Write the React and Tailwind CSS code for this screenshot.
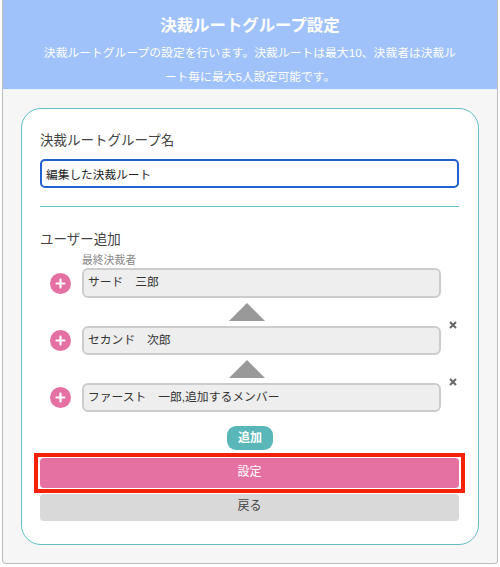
import React from "react"

const font = { fontFamily: '"Liberation Sans", "Noto Sans CJK JP", sans-serif' }

function PlusButton() {
  return (
    <button className="w-[21px] h-[21px] rounded-full bg-[#e571a2] flex items-center justify-center shrink-0">
      <svg width="11" height="11" viewBox="0 0 11 11">
        <path d="M5.5 1.5v8M1.5 5.5h8" stroke="#fff" strokeWidth="2.2" strokeLinecap="round" />
      </svg>
    </button>
  )
}

function Arrow() {
  return (
    <div className="ml-[42px] w-[329px] h-[28px] flex justify-center pt-[5px]">
      <div className="w-0 h-0 border-l-[18px] border-r-[18px] border-b-[18px] border-l-transparent border-r-transparent border-b-[#999999]" />
    </div>
  )
}

function Member({ name, removable, height = "h-[30px]" }) {
  return (
    <div className="flex">
      <div className="w-[10px] shrink-0" />
      <div className="w-[32px] shrink-0 flex items-center">
        <PlusButton />
      </div>
      <div className={`w-[359px] ${height} rounded-[6px] border-2 border-[#cccccc] bg-[#eeeeee] pl-[4px] flex items-center text-[11.8px] text-[#333333]`}>
        {name}
      </div>
      {removable && (
        <svg className="ml-[7px] -mt-[6px]" width="10" height="10" viewBox="0 0 10 10">
          <path d="M2 2l6 6M8 2l-6 6" stroke="#666666" strokeWidth="2" />
        </svg>
      )}
    </div>
  )
}

export default function App() {
  return (
    <div className="w-[500px] h-[567px] bg-white overflow-hidden px-[2px]" style={font}>
      <div className="h-[564px] border border-t-0 border-[#bdbdbd] rounded-b-[4px] bg-[#f6f6f6]">
        <div className="h-[90px] bg-[#9fc2fb] text-white text-center pt-[14px] border-b border-[#eef3fb]">
          <h1 className="text-[16.4px] leading-[22px] font-bold">決裁ルートグループ設定</h1>
          <p className="mt-[5px] mx-auto w-[420px] text-[11.8px] leading-[24px]">
            決裁ルートグループの設定を行います。決裁ルートは最大10、決裁者は決裁ルート毎に最大5人設定可能です。
          </p>
        </div>

        <div className="mx-[18px] mt-[18px] h-[437px] w-[458px] bg-white border border-[#5fbfc3] rounded-[20px] pt-[22px] px-[18px]">
          <label className="block text-[13.5px] leading-[20px] text-[#444444]">決裁ルートグループ名</label>
          <input
            defaultValue="編集した決裁ルート"
            className="block mt-[8px] w-[419px] h-[29px] px-[4px] border-2 border-[#2360cf] rounded-[5px] text-[11.7px] text-[#222222] outline-none"
          />
          <div className="mt-[18px] h-px w-[419px] bg-[#5fc3c8]" />

          <div className="mt-[24px] text-[13.5px] leading-[18px] text-[#444444]">ユーザー追加</div>
          <div className="ml-[42px] text-[10.8px] leading-[12px] mt-[5px] text-[#888888]">最終決裁者</div>
          <div className="mt-[2px]">
            <Member name="サード　三郎" />
            <Arrow />
            <Member name="セカンド　次郎" removable height="h-[29px]" />
            <Arrow />
            <Member name="ファースト　一郎,追加するメンバー" removable height="h-[29px]" />
          </div>

          <div className="mt-[14px] flex justify-center">
            <button className="w-[46px] h-[24px] rounded-[9px] bg-[#59b7b9] text-white text-[12px] font-bold">追加</button>
          </div>

          <div className="mt-[3px] -mx-[6px] w-[431px] h-[40px] border-[4px] border-[#f52208] px-[2px] py-px">
            <button className="w-full h-full rounded-[4px] bg-[#e571a2] text-white text-[12px] pb-[2px]">設定</button>
          </div>
          <button className="block mt-px w-[419px] h-[27px] rounded-[4px] bg-[#d9d9d9] text-[#444444] text-[12px] pb-[3px]">戻る</button>
        </div>
      </div>
    </div>
  )
}
